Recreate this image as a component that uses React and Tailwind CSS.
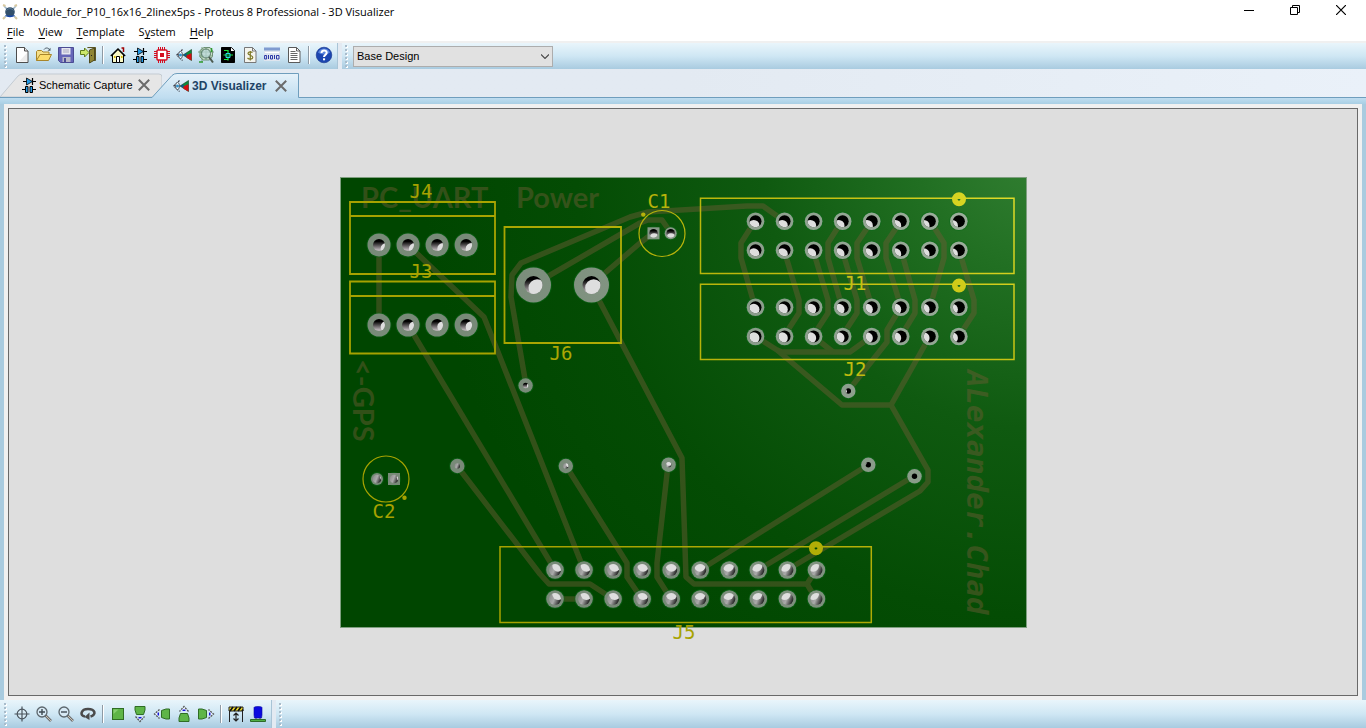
import React from "react";

/* ---------- toolbar icons ---------- */

function Icon({ children, className = "size-4" }) {
  return (
    <svg viewBox="0 0 16 16" className={`${className} shrink-0 overflow-visible`} fill="none" aria-hidden="true">
      {children}
    </svg>
  );
}

const AppIcon = () => (
  <Icon>
    <path d="M2 2l12 12M14 2L2 14" stroke="#9fb6c8" strokeWidth="1.6" />
    <path d="M1 1l2.500 1M15 1l-2.500 1M1 15l2-2M15 15l-2-2" stroke="#d8c9a0" strokeWidth="2" />
    <circle cx="8" cy="8" r="4.800" fill="#33506b" />
    <path d="M3 11c2 3 8 3 10 0l-2 .5H5z" fill="#1746a8" />
    <path d="M4.500 6.500c2-2.500 5-2.500 7 0" stroke="#5d7d99" />
  </Icon>
);

const NewIcon = () => (
  <Icon>
    <path d="M2.500 .5h8l3.500 3.500v11.500h-11.500z" fill="#fff" stroke="#4d4d4d" />
    <path d="M10.500 .5v3.500h3.500" fill="#e4e4e4" stroke="#4d4d4d" />
    <path d="M13 6v8.500H5z" fill="#ececec" />
  </Icon>
);

const OpenIcon = () => (
  <Icon>
    <path d="M.5 13.500v-9l1-1h4l1.500 1.500h6v3" fill="#f5e08a" stroke="#a8852a" />
    <path d="M.5 13.500l3.500-6h11.500l-3 6z" fill="#fbdc6b" stroke="#a8852a" />
    <path d="M8 2.500c1.500-2 4-2 5.500 0" stroke="#4c5a66" />
    <path d="M14.500 .8v3h-3z" fill="#4c5a66" />
  </Icon>
);

const SaveIcon = () => (
  <Icon>
    <path d="M.5 .5h15v15h-13l-2-2z" fill="#6565b8" stroke="#4b4b93" />
    <path d="M3.500 1h9v6.500h-9z" fill="#e6e6f0" />
    <path d="M5 3h6M5 5h6" stroke="#a9a9bf" />
    <path d="M4.500 10h8v5h-8z" fill="#b9b9c8" />
    <path d="M6 11h2v4H6z" fill="#4b4b93" />
  </Icon>
);

const ExitIcon = () => (
  <Icon>
    <path d="M7.500 .5h8v13h-2" fill="#3a3a33" stroke="#5b5626" />
    <path d="M8 1h6v12H8z" fill="#d9e3e6" />
    <path d="M9.500 3l5-2v12l-5 3z" fill="#8f8635" stroke="#4f4a1c" />
    <path d="M11 8.500h1" stroke="#222" />
    <path d="M.5 3.500h4V1l4.500 4.500L4.500 10V7.500h-4z" fill="#cde86a" stroke="#5e7b1d" />
  </Icon>
);

const HomeIcon = () => (
  <Icon>
    <path d="M2.500 8v7.500h11V8L8 2.500z" fill="#f8f8c4" stroke="#000" />
    <path d="M.8 9L8 1.800 15.200 9" stroke="#000" strokeWidth="1.300" />
    <path d="M11.500 1h2v4" stroke="#a00000" strokeWidth="1.500" />
    <path d="M6.500 9.500h3v6h-3z" fill="#fff" stroke="#000" />
    <path d="M4 10h1.500M11 10h1.500" stroke="#d8b800" strokeWidth="2" />
  </Icon>
);

const SchematicIcon = () => (
  <Icon>
    <path d="M2 4.500h13M11.500 1v7" stroke="#000" strokeWidth="1.200" />
    <path d="M5.500 1v7l6-3.500z" fill="#249be8" stroke="#000" strokeWidth=".8" />
    <path d="M1 12.500h3M12 12.500h3" stroke="#000" strokeWidth="1.200" />
    <path d="M4.500 9.500h2.500v6H4.500zM9 9.500h2.500v6H9z" fill="#249be8" stroke="#000" />
  </Icon>
);

const PcbIcon = () => (
  <Icon>
    <path d="M4.500 0v3M6.500 0v3M8.500 0v3M10.500 0v3M4.500 13v3M6.500 13v3M8.500 13v3M10.500 13v3M0 4.500h3M0 6.500h3M0 8.500h3M0 10.500h3M13 4.500h3M13 6.500h3M13 8.500h3M13 10.500h3" stroke="#d40d20" />
    <rect x="3" y="3" width="10" height="10" rx="1" fill="#fff" stroke="#d40d20" strokeWidth="1.400" />
    <rect x="6" y="6" width="4" height="4" fill="#d40d20" />
  </Icon>
);

const VisualizerIcon = () => (
  <Icon>
    <path d="M6.500 2.500L.8 8l5.700 5.500" stroke="#3a3a44" strokeDasharray="2 1" strokeWidth="1.200" />
    <ellipse cx="4.500" cy="8" rx="2" ry="3.500" fill="#fff" stroke="#55606c" />
    <circle cx="4.500" cy="8" r="1.500" fill="#2f8fc8" />
    <path d="M7 8L15.500 2.500v11z" fill="#0b8a3c" stroke="#123c1c" strokeWidth=".6" />
    <path d="M7.300 8l3.200-1.800v3.600z" fill="#0d4f9a" />
    <path d="M10.500 8.500l4-2h1v7l-5-2.800z" fill="#d40d12" />
  </Icon>
);

const GerberIcon = () => (
  <Icon>
    <path d="M2 3.500l4-3h6l2.500 3v6l-3 3.500H5l-3-3z" fill="#c9ddca" stroke="#6d8d74" />
    <path d="M4 0v15M8 0v13M0 5h16M1 9h13" stroke="#78a07f" />
    <circle cx="8" cy="6.500" r="4.500" fill="#bcd8dc" fillOpacity=".7" stroke="#557a66" />
    <path d="M11 10l4 5.500" stroke="#4c5a50" strokeWidth="2" />
    <path d="M1 15h4M13.500 1v4" stroke="#2d9c2d" strokeWidth="1.500" />
  </Icon>
);

const DesignExplorerIcon = () => (
  <Icon>
    <path d="M1.500 .5h10l3 3v12h-13z" fill="#000" stroke="#000" />
    <path d="M11 .5V4h3.500z" fill="#fff" />
    <path d="M4 3.500h4v2M8 5.500v8M3.500 8h3M10 8h3M4 12.500h4" stroke="#18e83c" strokeWidth="1.200" />
    <path d="M6 6.500h4v4H6z" stroke="#27dfe8" fill="#056d28" />
  </Icon>
);

const BomIcon = () => (
  <Icon>
    <path d="M2.500 .5h8l3.500 3.500v11.500h-11.500z" fill="#f4f4ee" stroke="#777" />
    <path d="M10.500 .5v3.500h3.500" stroke="#777" />
    <path d="M10.500 5.500c-1-1-4.500-1-4.500 1S10.800 8 10.800 10.300 7 12.500 5.500 11M8.300 4v9.500" stroke="#7f7a28" strokeWidth="1.200" />
  </Icon>
);

const CodeIcon = () => (
  <Icon>
    <path d="M0 1h16v13H0z" fill="#dfe5ee" />
    <path d="M0 2h16" stroke="#7f9bd0" strokeWidth="3" />
    <path d="M1 5.500h14" stroke="#fff" />
    <path d="M.6 8.500h2v3.500h-2zM4.500 8v4M6.500 8.500h2v3.500h-2zM10.500 8v4M12.500 8.500h2.500v3.500h-2.500z" stroke="#2c39a8" />
  </Icon>
);

const NotesIcon = () => (
  <Icon>
    <path d="M2.500 .5h8l3.500 3.500v11.500h-11.500z" fill="#fff" stroke="#5a5a5a" />
    <path d="M10.500 .5v3.500h3.500" stroke="#5a5a5a" />
    <path d="M4.500 4.500h5M4.500 6.500h7M4.500 8.500h7M4.500 10.500h7M4.500 12.500h7" stroke="#666" />
  </Icon>
);

const HelpIcon = () => (
  <Icon>
    <circle cx="8" cy="8" r="7.800" fill="#1c46b0" stroke="#12318a" strokeWidth=".6" />
    <path d="M2 5.500a6.500 6.500 0 0112 0c-3 2.500-9 2.500-12 0z" fill="#5c86dd" />
    <path d="M5.500 6c0-3.300 5.200-3.300 5.200-.2C10.700 8 8 7.800 8 10" stroke="#fff" strokeWidth="2" />
    <path d="M7 11.300h2.100v2H7z" fill="#fff" />
  </Icon>
);

const CrosshairIcon = () => (
  <Icon>
    <circle cx="8" cy="8" r="4.800" fill="#dcecf5" fillOpacity=".7" stroke="#4a545c" strokeWidth="1.200" />
    <path d="M8 .5v15M.5 8h15" stroke="#4a545c" strokeWidth="1.200" />
  </Icon>
);

const ZoomIcon = ({ plus }) => (
  <Icon>
    <path d="M9.500 9.500l5.500 5.500" stroke="#707070" strokeWidth="2.600" />
    <path d="M9.500 9.500l5.500 5.500" stroke="#c9c3b4" strokeWidth="1" />
    <circle cx="6" cy="6" r="5" fill="#d7e9f4" stroke="#5c666d" strokeWidth="1.300" />
    <path d={plus ? "M3 6h6M6 3v6" : "M3 6h6"} stroke="#3f4a52" strokeWidth="1.400" />
  </Icon>
);

const SpinIcon = () => (
  <Icon>
    <path d="M5 10.500C-.8 9.500 1 3 8 3s9 5.500 2.500 7.500" stroke="#4b4b4b" strokeWidth="2.600" />
    <path d="M9.500 6.500v7.500L4.500 11z" fill="#4b4b4b" />
  </Icon>
);

const TopViewIcon = () => (
  <Icon>
    <rect x="2.500" y="2.500" width="11" height="11" fill="#5eb548" stroke="#2f6d24" />
    <path d="M3.500 8l5-4.500h-5z" fill="#86cf70" />
  </Icon>
);

const SideViewIcon = ({ turn }) => (
  <Icon>
    <g transform={`rotate(${turn} 8 8)`}>
      <path d="M3 .5h10v3.500l-1.500 4.500h-7L3 4z" fill="#5eb548" stroke="#2f6d24" />
      <path d="M3.500 10.500L8 15.500l4.500-5" stroke="#555" strokeDasharray="2 1" strokeWidth="1.300" />
      <path d="M5.500 11.500h5L8 14z" fill="#fff" />
      <path d="M6.500 11h3v1.500h-3z" fill="#1515d8" />
    </g>
  </Icon>
);

const HeightIcon = () => (
  <Icon>
    <path d="M1 1h14v4H1z" fill="#f1e02a" stroke="#222" />
    <path d="M2 5l3-4M6 5l3-4M10 5l3-4M14 5l1-1.500" stroke="#111" strokeWidth="1.700" />
    <path d="M1.500 5v11M14.500 5v11" stroke="#222" />
    <path d="M8 7v8M5.500 9.500L8 7l2.500 2.500M5.500 12.500L8 15l2.500-2.500" stroke="#222" strokeWidth="1.200" />
  </Icon>
);

const ComponentIcon = () => (
  <Icon>
    <path d="M4 1.500c0-1.300 8-1.300 8 0V9l-.5 3h-7L4 9z" fill="#0a0ae0" stroke="#0808a0" strokeWidth=".6" />
    <path d="M6 12v2M10 12v2" stroke="#444" />
    <path d="M.5 13.500h15v2H.5z" fill="#4fae45" stroke="#2c6b28" />
  </Icon>
);

const CloseGlyph = () => (
  <svg viewBox="0 0 12 12" className="size-3" fill="none" aria-hidden="true">
    <path d="M.8 .8l10.400 10.400M11.200 .8L.8 11.200" stroke="#6b6b6b" strokeWidth="2" />
  </svg>
);

/* ---------- toolbar parts ---------- */

function Grip() {
  return (
    <svg viewBox="0 0 4 26" className="h-[26px] w-1 shrink-0" aria-hidden="true">
      {[2, 6, 10, 14, 18, 22].map((y) => (
        <g key={y}>
          <rect x="1" y={y + 1} width="2" height="2" fill="#fff" />
          <rect x="0" y={y} width="2" height="2" fill="#a9bccb" />
        </g>
      ))}
    </svg>
  );
}

const Divider = () => <span className="mx-[3px] h-[18px] w-0.5 border-l border-[#8e9aa4] bg-white" />;

function Tool({ label, icon }) {
  return (
    <button type="button" aria-label={label} className="flex h-6 w-[22px] shrink-0 items-center justify-center">
      {icon}
    </button>
  );
}

const fileTools = [
  ["New Project", <NewIcon />],
  ["Open Project", <OpenIcon />],
  ["Save Project", <SaveIcon />],
  ["Close Project", <ExitIcon />],
];

const moduleTools = [
  ["Home Page", <HomeIcon />],
  ["Schematic Capture", <SchematicIcon />],
  ["PCB Layout", <PcbIcon />],
  ["3D Visualizer", <VisualizerIcon />],
  ["Gerber Viewer", <GerberIcon />],
  ["Design Explorer", <DesignExplorerIcon />],
  ["Bill of Materials", <BomIcon />],
  ["Source Code", <CodeIcon />],
  ["Project Notes", <NotesIcon />],
];

const navTools = [
  ["Navigate", <CrosshairIcon />],
  ["Zoom In", <ZoomIcon plus />],
  ["Zoom Out", <ZoomIcon />],
  ["Spin", <SpinIcon />],
];

const viewTools = [
  ["Top View", <TopViewIcon />],
  ["Front View", <SideViewIcon turn={0} />],
  ["Left View", <SideViewIcon turn={90} />],
  ["Back View", <SideViewIcon turn={180} />],
  ["Right View", <SideViewIcon turn={270} />],
];

const showTools = [
  ["Height Bounds", <HeightIcon />],
  ["Show Components", <ComponentIcon />],
];

const tools = (list) => list.map(([label, icon]) => <Tool key={label} label={label} icon={icon} />);

/* ---------- circuit board ---------- */

const TRACES = [
  "379,245 379,325",
  "408,245 484,317 498,352 584,570",
  "408,325 555,570",
  "533,285 640,223 648,220 662,220 671,233",
  "591,285 640,243 653,233",
  "526,385 511,297 512,275 521,263 630,217 648,212 747,206 763,206 784,221",
  "591,285 682,458 686,577 694,584 807,584 816,570",
  "807,584 816,599",
  "457,466 540,574 549,584 590,584 613,599",
  "555,599 584,599",
  "566,466 627,563 627,577 642,599",
  "668,465 657,563 657,577 671,599",
  "868,465 700,570",
  "914,476 758,570",
  "787,570 920,491 928,482 928,470 891,405 842,405 777,350 755,336",
  "891,405 930,336",
  "777,350 782,352 850,352 872,336",
  "813,336 833,352",
  "848,391 887,342 887,330 901,307",
  "755,221 741,243 741,258 755,307",
  "784,250 799,300 799,313 784,336",
  "813,250 828,300 828,313 813,336",
  "842,221 828,243 828,258 842,307",
  "842,250 857,300 857,313 842,336",
  "872,221 857,243 857,258 872,307",
  "901,221 886,243 886,258 901,307",
  "901,250 915,300 915,313 901,336",
  "930,221 944,243 944,258 930,307",
  "959,250 974,300 974,313 959,336",
];

const row = (x0, y, count, r, hole) =>
  Array.from({ length: count }, (_, i) => ({ x: x0 + 29.05 * i, y, r, hole }));

const PADS = [
  ...row(379, 245, 4, 11.5, 6),
  ...row(379, 325, 4, 11.5, 6),
  { x: 533.5, y: 285, r: 17.5, hole: 9 },
  { x: 591.5, y: 285, r: 17.5, hole: 9 },
  ...row(755.5, 221.3, 8, 8.8, 6),
  ...row(755.5, 250.3, 8, 8.8, 6),
  ...row(755.5, 307.3, 8, 8.8, 6),
  ...row(755.5, 336.5, 8, 8.8, 6),
  ...row(555, 570, 10, 8.8, 6),
  ...row(555, 599, 10, 8.8, 6),
  { x: 653.5, y: 233.3, r: 6, hole: 4.3, square: true },
  { x: 670.7, y: 233.3, r: 6, hole: 4.3 },
  { x: 377, y: 479, r: 6, hole: 4.3 },
  { x: 394, y: 479, r: 6, hole: 4.3, square: true },
  { x: 525.6, y: 385.5, r: 7.2, hole: 2.7 },
  { x: 457.3, y: 466, r: 7.2, hole: 2.7 },
  { x: 565.8, y: 466, r: 7.2, hole: 2.7 },
  { x: 668.6, y: 464.7, r: 7.2, hole: 2.7 },
  { x: 848.3, y: 391, r: 7.2, hole: 2.7 },
  { x: 868.3, y: 464.8, r: 7.2, hole: 2.7 },
  { x: 914.5, y: 476.3, r: 7.2, hole: 2.7 },
];

/* The far end of each drilled hole shifts towards the board centre. */
function Pad({ x, y, r, hole, square }, i) {
  const wall = x > 745 && y < 500 ? "#000" : y > 450 ? "url(#wallLow)" : "url(#wallHigh)";
  return (
    <g key={i}>
      <circle cx={x} cy={y} r={r + 1} fill="#0c6a1c" fillOpacity=".55" />
      {square ? (
        <rect x={x - r} y={y - r} width={2 * r} height={2 * r} fill="url(#metal)" />
      ) : (
        <circle cx={x} cy={y} r={r} fill="url(#metal)" />
      )}
      <clipPath id={`hole${i}`}>
        <circle cx={x} cy={y} r={hole} />
      </clipPath>
      <circle cx={x} cy={y} r={hole} fill={wall} />
      <circle
        cx={x + (683 - x) * 0.024}
        cy={y + (402 - y) * 0.024}
        r={hole * 0.95}
        fill="#dedede"
        clipPath={`url(#hole${i})`}
      />
    </g>
  );
}

function Board() {
  return (
    <svg viewBox="340 177 686 450" className="w-[686px] shrink-0 overflow-visible" role="img" aria-label="Printed circuit board">
      <defs>
        <radialGradient id="solder" gradientUnits="userSpaceOnUse" cx="1040" cy="150" r="620">
          <stop offset="0" stopColor="#338033" />
          <stop offset=".2" stopColor="#216f22" />
          <stop offset=".45" stopColor="#0f5a10" />
          <stop offset=".75" stopColor="#044c04" />
          <stop offset="1" stopColor="#004600" />
        </radialGradient>
        <radialGradient id="silk" gradientUnits="userSpaceOnUse" cx="1026" cy="177" r="560">
          <stop offset="0" stopColor="#e2df2c" />
          <stop offset=".3" stopColor="#c8c414" />
          <stop offset="1" stopColor="#a6a200" />
        </radialGradient>
        <radialGradient id="metal" gradientUnits="userSpaceOnUse" cx="1026" cy="177" r="560">
          <stop offset="0" stopColor="#a2b4a2" />
          <stop offset="1" stopColor="#788a78" />
        </radialGradient>
        <linearGradient id="wallHigh" x1=".4" y1="0" x2=".4" y2="1">
          <stop offset=".2" stopColor="#000" />
          <stop offset=".9" stopColor="#b9b2b6" />
        </linearGradient>
        <linearGradient id="wallLow" x1="0" y1=".3" x2="1" y2=".7">
          <stop offset="0" stopColor="#8c8c8c" />
          <stop offset=".45" stopColor="#aaa" />
          <stop offset=".95" stopColor="#222" />
        </linearGradient>
      </defs>

      <rect x="340.5" y="177.500" width="686" height="450" fill="url(#solder)" stroke="#7f9f80" />

      <g opacity=".48" stroke="#6a5c34" strokeWidth="5.500" fill="none" strokeLinejoin="round">
        {TRACES.map((points) => (
          <polyline key={points} points={points} />
        ))}
        <g fill="#6a5c34" stroke="none" fontFamily="Lato, 'Open Sans', sans-serif" fontWeight="700" fontSize="29">
          <text x="361" y="208">PC_UART</text>
          <text x="516" y="208">Power</text>
          <text transform="translate(353 359)rotate(90)">&lt;-GPS</text>
        </g>
        <text
          transform="translate(967 370)rotate(90)"
          fill="#6a5c34"
          stroke="none"
          fontFamily="'DejaVu Sans Mono', monospace"
          fontStyle="italic"
          fontWeight="700"
          fontSize="29"
        >
          ALexander.Chad
        </text>
      </g>

      <g stroke="url(#silk)" strokeWidth="1.800" fill="none">
        <path d="M350 202h145v72h-145zM350 216h145.010M350 281.500h145v72h-145zM350 296h145.010" />
        <path d="M504.500 227h116.500v116h-116.500z" />
        <path d="M700.500 198.300h313.500v75.200h-313.500zM700.500 284.300h313.500v75.200h-313.500z" strokeWidth="1.500" />
        <path d="M500 546.700h371.300v75.700h-371.300z" strokeWidth="1.500" />
        <circle cx="662" cy="233.500" r="23" strokeWidth="1.200" />
        <circle cx="386" cy="479" r="23" strokeWidth="1.200" />
      </g>

      {PADS.map(Pad)}

      <g fill="url(#silk)">
        <circle cx="643.300" cy="214.600" r="2.200" />
        <circle cx="404.500" cy="497.700" r="2.200" />
      </g>
      <g fill="none" stroke="url(#silk)" strokeWidth="5.600">
        <circle cx="959" cy="199.300" r="4.200" />
        <circle cx="959" cy="285.600" r="4.200" />
        <circle cx="816" cy="548.200" r="4.200" />
      </g>
      <g fill="url(#silk)" textAnchor="middle" fontFamily="'DejaVu Sans Mono', monospace" fontSize="19">
        <text x="421" y="198">J4</text>
        <text x="421" y="278">J3</text>
        <text x="561" y="360">J6</text>
        <text x="659" y="208">C1</text>
        <text x="855" y="290">J1</text>
        <text x="855" y="376">J2</text>
        <text x="384" y="518">C2</text>
        <text x="684" y="639">J5</text>
      </g>
    </svg>
  );
}

/* ---------- window ---------- */

function TitleBar() {
  return (
    <header className="flex h-6 items-center bg-white pl-[2px] pr-[2px] text-[11px] text-black">
      <AppIcon />
      <h1 className="flex-1 pl-[5px]">Module_for_P10_16x16_2linex5ps - Proteus 8 Professional - 3D Visualizer</h1>
      <button type="button" aria-label="Minimize" className="flex h-6 w-[46px] items-center justify-center pb-1">
        <svg viewBox="0 0 10 10" className="size-2.5" aria-hidden="true">
          <path d="M0 5.500h10" stroke="#000" />
        </svg>
      </button>
      <button type="button" aria-label="Restore" className="flex h-6 w-[46px] items-center justify-center pb-1">
        <svg viewBox="0 0 10 10" className="size-2.5" fill="none" stroke="#000" aria-hidden="true">
          <path d="M.5 2.500h7v7h-7zM2.500 2.500v-2h7v7h-2" />
        </svg>
      </button>
      <button type="button" aria-label="Close" className="flex h-6 w-[46px] items-center justify-center pb-1">
        <svg viewBox="0 0 10 10" className="size-2.5" stroke="#000" strokeWidth="1.200" aria-hidden="true">
          <path d="M0 0l10 10M10 0L0 10" />
        </svg>
      </button>
    </header>
  );
}

function MenuBar() {
  const items = [
    ["", "F", "ile"],
    ["", "V", "iew"],
    ["", "T", "emplate"],
    ["S", "y", "stem"],
    ["", "H", "elp"],
  ];
  return (
    <nav className="flex h-[17px] items-center gap-[14px] bg-white px-[7px] text-[11px] text-black">
      {items.map(([before, key, after]) => (
        <button type="button" key={key}>
          {before}
          <span className="underline underline-offset-2">{key}</span>
          {after}
        </button>
      ))}
    </nav>
  );
}

function TopToolbar() {
  return (
    <div className="flex h-7 border-t-2 border-[#f0f0f0] bg-linear-to-b from-[#e9f5fb] via-[#cfe7f4] to-[#a9cbe0]">
      <div className="flex items-center border-r border-[#a9c4d6] pl-1">
        <Grip />
        <div className="flex items-center pb-[2px] pl-[3px] pr-[2px]">
          {tools(fileTools)}
          <Divider />
          {tools(moduleTools)}
          <Divider />
          <Tool label="Help" icon={<HelpIcon />} />
        </div>
      </div>
      <span className="w-1 bg-[#e3eaf2]" />
      <div className="flex items-center gap-1 pl-[3px]">
        <Grip />
        <div className="relative flex">
          <select
            aria-label="Design variant"
            className="h-[21px] w-[200px] appearance-none border border-[#adadad] bg-[#e1e1e1] pl-[3px] font-['Liberation_Sans',Arial,sans-serif] text-[11px] text-black"
          >
            <option>Base Design</option>
          </select>
          <svg viewBox="0 0 8 5" className="pointer-events-none absolute right-1 top-2 h-[5px] w-2" fill="none" aria-hidden="true">
            <path d="M0 .5l4 4 4-4" stroke="#444" strokeWidth="1.100" />
          </svg>
        </div>
      </div>
    </div>
  );
}

function TabStrip() {
  return (
    <div
      role="tablist"
      className="flex h-[29px] items-end border-b border-[#6f9ebd] bg-linear-to-r from-[#e3eaf2] via-[#e3eaf2] to-[#eaf1f9] font-['Liberation_Sans',Arial,sans-serif]"
    >
      <div className="relative flex h-6 w-[162px] items-center">
        <svg viewBox="0 0 162 24" className="absolute inset-0 h-6 w-[162px]" aria-hidden="true">
          <path d="M0 24L18 3q2-2 5-2h136q3 0 3 3v20z" fill="#e6e6e6" stroke="#c3cbd2" />
        </svg>
        <button type="button" role="tab" aria-selected="false" className="relative flex items-center gap-[2px] pl-[21px] text-[11px] text-black">
          <SchematicIcon />
          Schematic Capture
        </button>
        <button type="button" aria-label="Close Schematic Capture" className="relative ml-auto mr-3">
          <CloseGlyph />
        </button>
      </div>
      <div className="relative -mb-px -ml-[10px] flex h-[25px] w-[147px] items-center">
        <svg viewBox="0 0 147 25" className="absolute inset-0 h-[25px] w-[147px]" aria-hidden="true">
          <defs>
            <linearGradient id="activeTab" x1="0" y1="0" x2="0" y2="1">
              <stop offset="0" stopColor="#e6f2fa" />
              <stop offset="1" stopColor="#bfddf0" />
            </linearGradient>
          </defs>
          <path d="M0 24.500L20 2.500q2-2 5-2h121.500v24.500H0z" fill="url(#activeTab)" />
          <path d="M0 24.500L20 2.500q2-2 5-2h121.500v24" fill="none" stroke="#6f9ebd" />
        </svg>
        <button type="button" role="tab" aria-selected="true" className="relative flex items-center gap-[3px] pl-[21px] text-xs font-bold text-[#1f4466]">
          <VisualizerIcon />
          3D Visualizer
        </button>
        <button type="button" aria-label="Close 3D Visualizer" className="relative ml-auto mr-3">
          <CloseGlyph />
        </button>
      </div>
    </div>
  );
}

function BottomToolbar() {
  return (
    <footer className="flex h-7 bg-linear-to-b from-[#e9f5fb] via-[#cfe7f4] to-[#a9cbe0]">
      <div className="flex items-center border-r border-[#a9c4d6] pl-1">
        <Grip />
        <div className="flex items-center pl-[3px] pr-[2px]">
          {tools(navTools)}
          <Divider />
          {tools(viewTools)}
          <Divider />
          {tools(showTools)}
        </div>
      </div>
      <span className="w-1 bg-[#e3eaf2]" />
      <div className="flex items-center pl-[3px]">
        <Grip />
      </div>
    </footer>
  );
}

export default function App() {
  return (
    <div className="flex min-h-screen flex-col bg-[#f0f0f0] font-['Open_Sans','Noto_Sans',sans-serif]">
      <TitleBar />
      <MenuBar />
      <TopToolbar />
      <TabStrip />
      <div className="h-[6px] bg-linear-to-b from-[#bfddf0] to-[#a9cfe4]" />
      <main className="flex flex-1 border-x-4 border-[#a9cbdf] bg-[#f0f0f0] p-1">
        <section className="flex flex-1 items-center justify-center overflow-hidden border border-[#696969] bg-[#dedede]">
          <Board />
        </section>
      </main>
      <BottomToolbar />
    </div>
  );
}
